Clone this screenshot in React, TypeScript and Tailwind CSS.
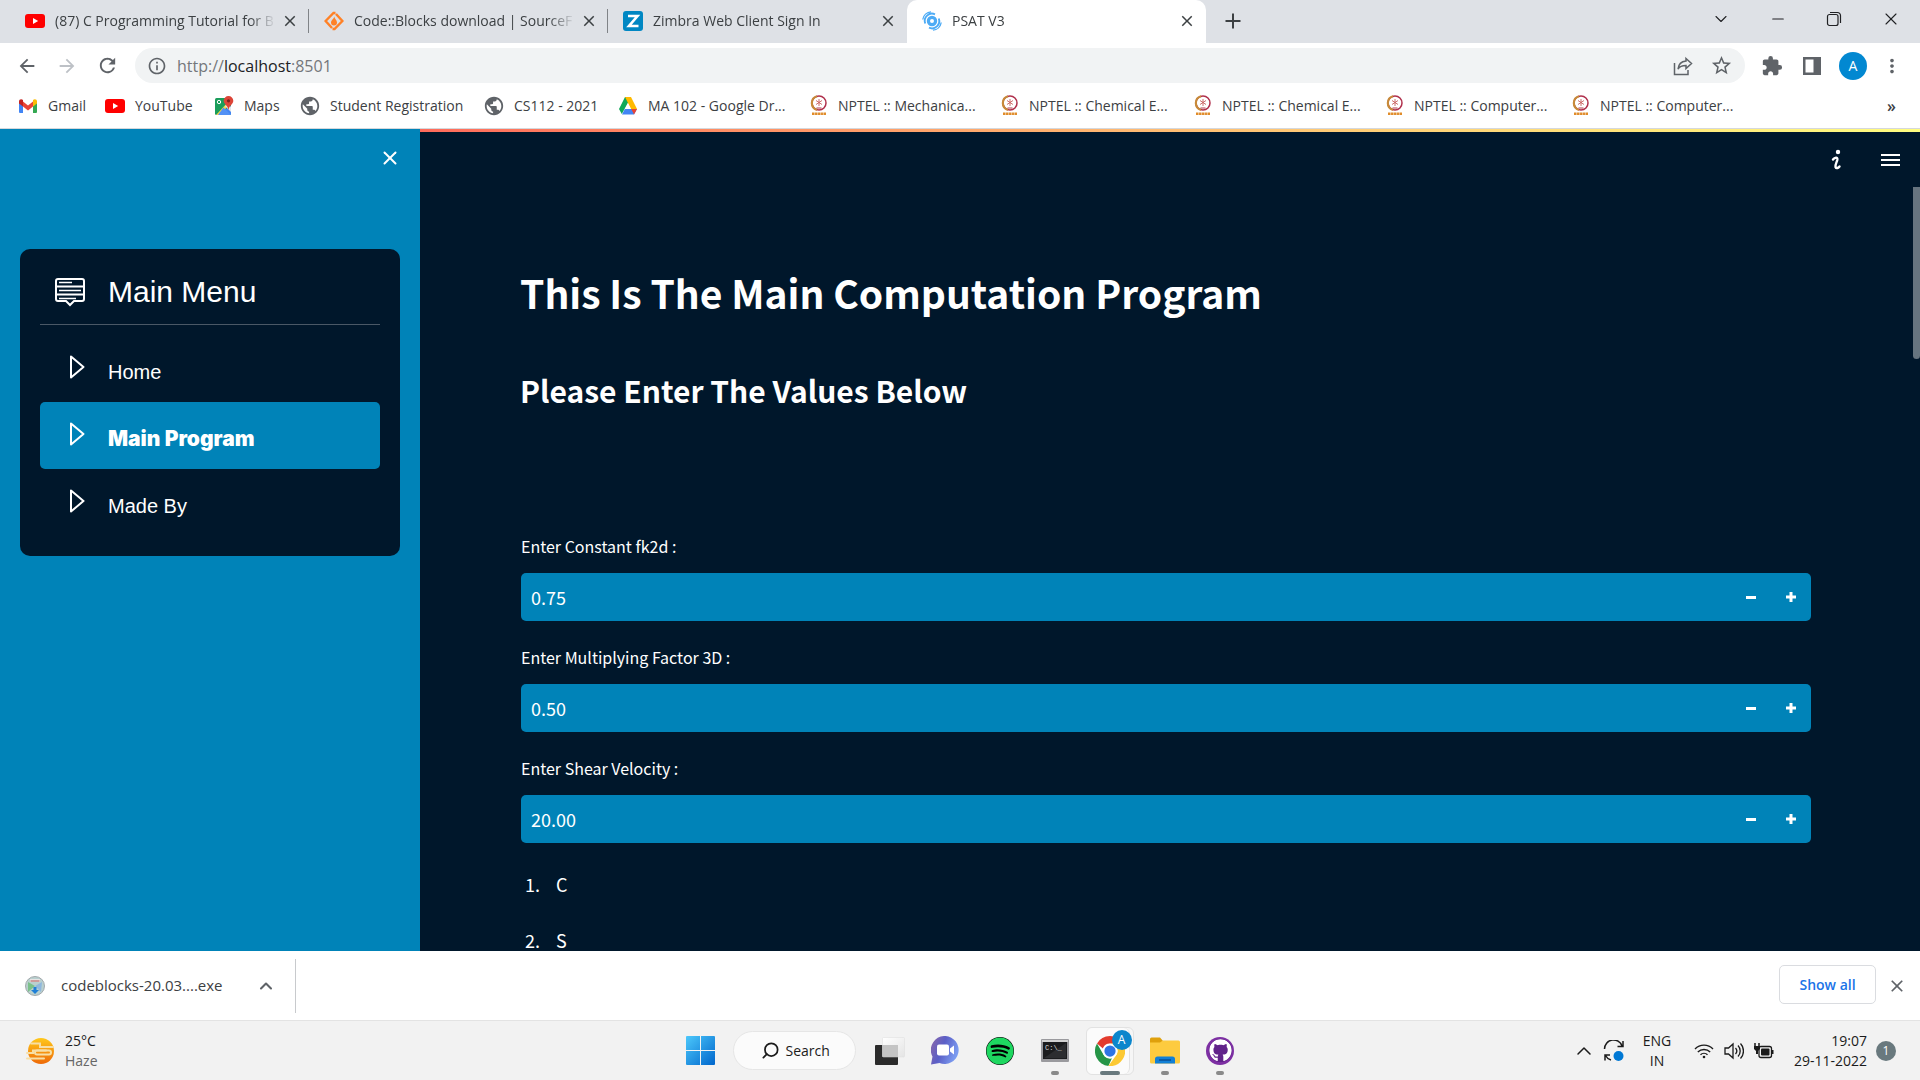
import type { ReactNode } from "react";
import { FaGithub, FaSpotify } from "react-icons/fa";
import {
  MdArrowBack,
  MdArrowForward,
  MdClose,
  MdExtension,
  MdMoreVert,
  MdOutlineInfo,
  MdPublic,
  MdRefresh,
  MdStarOutline,
} from "react-icons/md";
import { ChevronDown, ChevronUp, Minus, Search, X } from "lucide-react";

const YouTubeIcon = () => (
  <svg width="20" height="20" viewBox="0 0 20 20" className="shrink-0">
    <rect y="3" width="20" height="14" rx="3" fill="#f00" />
    <path d="M8 7l5.2 3L8 13z" fill="#fff" />
  </svg>
);

const SourceForgeIcon = () => (
  <svg width="20" height="20" viewBox="0 0 20 20" className="shrink-0" fill="none" stroke="#ff8126">
    <path d="M11.500 2L9.500 2 1.600 10l6.400 7" strokeWidth="2.400" />
    <path d="M8.500 18h2L18.400 10 12 3" strokeWidth="2.400" />
    <path d="M10.200 5.500c.3 2.400 2.800 3.400 2.800 6a3 3 0 0 1-6 .1c0-2.600 2.800-3.400 3.200-6.100z" fill="#ff8126" stroke="none" />
  </svg>
);

const ZimbraIcon = () => (
  <svg width="20" height="20" viewBox="0 0 20 20" className="shrink-0">
    <rect width="20" height="20" rx="3" fill="#0087c3" />
    <path d="M5 5h9.500L6 15h9.500" fill="none" stroke="#fff" strokeWidth="2.600" />
  </svg>
);

const SwirlIcon = () => (
  <svg width="20" height="20" viewBox="0 0 20 20" className="shrink-0" fill="none" stroke="#4dabf5">
    <circle cx="10" cy="10" r="3.600" strokeWidth="3.200" />
    <path d="M3.200 12.500A7.300 7.300 0 0 1 13 3.300M16.800 7.500A7.300 7.300 0 0 1 7 16.700" strokeWidth="1.900" />
    <path d="M.8 8.500A9 9 0 0 1 9 .9M19.200 11.500A9 9 0 0 1 11 19.100" strokeWidth="1.400" />
  </svg>
);

const GmailIcon = () => (
  <svg width="20" height="20" viewBox="0 0 20 20" className="shrink-0">
    <path d="M1 5v11a1 1 0 0 0 1 1h3V9z" fill="#4285f4" />
    <path d="M19 5v11a1 1 0 0 1-1 1h-3V9z" fill="#34a853" />
    <path d="M5 5.500l5 4 5-4v5l-5 4-5-4z" fill="#ea4335" />
    <path d="M1 5.500C1 3.200 3.400 2.700 5 4v6.500L1 7.500z" fill="#c5221f" />
    <path d="M19 5.500c0-2.300-2.400-2.800-4-1.500v6.500l4-3z" fill="#fbbc04" />
  </svg>
);

const MapsIcon = () => (
  <svg width="20" height="20" viewBox="0 0 20 20" className="shrink-0">
    <rect x="1" y="2" width="16" height="17" rx="1.500" fill="#1a9d5a" />
    <path d="M17 10v7.500a1.500 1.500 0 0 1-1.500 1.500H2z" fill="#4285f4" />
    <path d="M2 19l13-14 2 2-11.500 12z" fill="#fbd14b" />
    <path d="M9.500 11.500l7.500 7.500H4z" fill="#5391f5" />
    <path d="M11 10l6 6v-5l-3-3z" fill="#e4e7ea" />
    <circle cx="5" cy="6" r="1.700" fill="none" stroke="#fff" />
    <path d="M14.500 0a4.800 4.800 0 0 1 4.800 4.800c0 3.500-4.200 4.700-4.800 9.200-.6-4.500-4.800-5.700-4.800-9.200A4.800 4.800 0 0 1 14.500 0z" fill="#dc4437" />
    <circle cx="14.500" cy="4.800" r="1.600" fill="#7b231c" />
  </svg>
);

const DriveIcon = () => (
  <svg width="20" height="20" viewBox="0 0 20 20" className="shrink-0">
    <path d="M7 1h6L6.500 13 3.800 18 1 13z" fill="#0fa958" />
    <path d="M7 1h6l-3 5.300z" fill="#188038" />
    <path d="M7 1h6l6 12h-6z" fill="#ffba00" />
    <path d="M6.800 13H19l-3 5.500H4z" fill="#4285f4" />
    <path d="M13.200 13H19l-3 5.500z" fill="#ea4335" />
    <path d="M10 7.500L13 13H7z" fill="#fff" />
  </svg>
);

const NptelIcon = () => (
  <svg width="18" height="21" viewBox="0 0 18 21" className="shrink-0">
    <circle cx="9" cy="8" r="7" fill="none" stroke="#b0304c" strokeWidth="1.500" />
    <path d="M7 15A7.200 7.200 0 0 1 7 1.200" fill="none" stroke="#c78a3a" strokeWidth="2.200" />
    <path d="M9 4v7M6 5.500l6 4M12 5.500l-6 4" stroke="#c8605f" strokeWidth=".9" />
    <path d="M6.500 13h5" stroke="#b03a48" />
    <path d="M2 17.500h14v2.500H2z" fill="#e08c2a" />
    <path d="M4.600 17v4M7.600 17v4M10.600 17v4M13.400 17v4" stroke="#fff" strokeWidth=".5" />
  </svg>
);

const GlobeIcon = () => <MdPublic size={22} className="-mx-px shrink-0 text-[#5f6368]" />;

type TabInfo = { title: string; icon: ReactNode; active?: boolean; line?: boolean };

const tabs: TabInfo[] = [
  { title: "(87) C Programming Tutorial for B", icon: <YouTubeIcon />, line: true },
  { title: "Code::Blocks download | SourceF", icon: <SourceForgeIcon />, line: true },
  { title: "Zimbra Web Client Sign In", icon: <ZimbraIcon /> },
  { title: "PSAT V3", icon: <SwirlIcon />, active: true },
];

function TabItem({ tab }: { tab: TabInfo }) {
  return (
    <div
      role="tab"
      aria-selected={!!tab.active}
      className={
        tab.active
          ? "flex h-full w-[299px] items-center rounded-t-[10px] bg-white pb-0.5 pl-[15px]"
          : "flex h-full w-[299px] items-center pb-0.5 pl-[15px]"
      }
    >
      {tab.icon}
      <span className="ml-[10px] min-w-0 flex-1 overflow-hidden text-sm whitespace-nowrap [mask-image:linear-gradient(to_right,black_88%,transparent)]">
        {tab.title}
      </span>
      <button type="button" aria-label={`Close ${tab.title}`} className="ml-1 flex w-5 justify-center">
        <MdClose size={18} />
      </button>
      <span className={tab.line ? "ml-2 h-6 w-px bg-[#808387]" : "ml-2 h-6 w-px"} />
    </div>
  );
}

const bookmarks = [
  { label: "Gmail", icon: <GmailIcon />, width: "w-[87px]" },
  { label: "YouTube", icon: <YouTubeIcon />, width: "w-[109px]" },
  { label: "Maps", icon: <MapsIcon />, width: "w-[86px]" },
  { label: "Student Registration", icon: <GlobeIcon />, width: "w-[184px]" },
  { label: "CS112 - 2021", icon: <GlobeIcon />, width: "w-[134px]" },
  { label: "MA 102 - Google Dr...", icon: <DriveIcon />, width: "w-[192px]" },
  { label: "NPTEL :: Mechanica...", icon: <NptelIcon />, width: "w-[191px]" },
  { label: "NPTEL :: Chemical E...", icon: <NptelIcon />, width: "w-[193px]" },
  { label: "NPTEL :: Chemical E...", icon: <NptelIcon />, width: "w-[192px]" },
  { label: "NPTEL :: Computer...", icon: <NptelIcon />, width: "w-[186px]" },
  { label: "NPTEL :: Computer...", icon: <NptelIcon />, width: "w-[186px]" },
];

function BrowserChrome() {
  return (
    <header className="shrink-0 bg-white font-['Open_Sans',sans-serif] text-[#3c4043]">
      <div className="flex h-[43px] items-center bg-[#dee1e6] pl-[10px]">
        <div role="tablist" className="flex h-full">
          {tabs.map((tab) => (
            <TabItem key={tab.title} tab={tab} />
          ))}
        </div>
        <button type="button" aria-label="New tab" className="mb-0.5 ml-[17px]">
          <svg width="20" height="20" viewBox="0 0 20 20" stroke="#3c4043" strokeWidth="2">
            <path d="M10 2.500v15M2.500 10h15" />
          </svg>
        </button>
        <div className="mr-[19px] mb-[6px] ml-auto flex items-center gap-[38px] text-[#202124]">
          <button type="button" aria-label="Search tabs"><ChevronDown size={20} strokeWidth={1.300} /></button>
          <button type="button" aria-label="Minimize"><Minus size={18} strokeWidth={1.500} /></button>
          <button type="button" aria-label="Restore">
            <svg width="18" height="18" viewBox="0 0 18 18" fill="none" stroke="#202124" strokeWidth="1.200">
              <rect x="2.500" y="4.500" width="10.500" height="11" rx="2" />
              <path d="M5 2.500h7.500a3 3 0 0 1 3 3V13" />
            </svg>
          </button>
          <button type="button" aria-label="Close window"><X size={20} strokeWidth={1.300} /></button>
        </div>
      </div>
      <div className="flex h-[45px] items-center pr-[17px] pl-4">
        <div className="flex w-[119px] items-center gap-[18px] text-[#5f6368]">
          <button type="button" aria-label="Back"><MdArrowBack size={22} /></button>
          <button type="button" aria-label="Forward" className="text-[#bdc1c6]"><MdArrowForward size={22} /></button>
          <button type="button" aria-label="Reload"><MdRefresh size={23} /></button>
        </div>
        <div className="flex h-[35px] flex-1 items-center rounded-full bg-[#f1f3f4] px-3">
          <MdOutlineInfo size={20} className="text-[#5f6368]" />
          <div className="ml-[10px] flex-1 text-base text-[#74777b]">
            http://<span className="text-[#202124]">localhost</span>:8501
          </div>
          <button type="button" aria-label="Share">
            <svg width="20" height="20" viewBox="0 0 20 20" fill="none" stroke="#5f6368" strokeWidth="1.500">
              <path d="M1.500 7v11.500H15V14" />
              <path d="M13 2.500L18.500 7.500 13 12.500V9.500C9 9.500 6.500 10.500 5 13c.5-5 3.500-7.500 8-8z" />
            </svg>
          </button>
          <button type="button" aria-label="Bookmark" className="ml-[17px] text-[#5f6368]"><MdStarOutline size={23} /></button>
        </div>
        <div className="ml-4 flex items-center text-[#5f6368]">
          <button type="button" aria-label="Extensions"><MdExtension size={22} /></button>
          <button type="button" aria-label="Side panel" className="ml-5">
            <svg width="18" height="18" viewBox="0 0 18 18">
              <path d="M0 0h18v18H0zM2.500 2.500v13h8v-13z" fill="#5f6368" fillRule="evenodd" />
            </svg>
          </button>
          <button type="button" aria-label="Profile" className="ml-[18px] flex size-7 items-center justify-center rounded-full bg-[#0288d1] text-sm text-white">
            A
          </button>
          <button type="button" aria-label="Menu" className="ml-[14px]"><MdMoreVert size={22} /></button>
        </div>
      </div>
      <nav className="flex h-[41px] items-center border-b border-[#d5d8dc] pr-6 pb-[5px] pl-[18px] text-sm">
        {bookmarks.map((b, i) => (
          <a key={i} href="#" className={`flex shrink-0 items-center gap-[10px] whitespace-nowrap ${b.width}`}>
            {b.icon}
            {b.label}
          </a>
        ))}
        <button type="button" aria-label="More bookmarks" className="ml-auto text-base font-semibold">»</button>
      </nav>
    </header>
  );
}

function Sidebar() {
  return (
    <aside className="flex w-[420px] shrink-0 flex-col bg-[#0083b8] px-5 pt-[18px] text-white">
      <button type="button" aria-label="Close sidebar" className="-mr-px self-end">
        <X size={22} strokeWidth={2.200} />
      </button>
      <nav className="mt-20 rounded-[10px] bg-[#00172b] p-5 font-['Liberation_Sans',Arial,sans-serif]">
        <div className="flex h-14 items-center border-b border-[#4a5866] pb-[10px] pl-[15px]">
          <svg width="30" height="30" viewBox="0 0 30 30" fill="none" stroke="#fff" strokeWidth="2">
            <path d="M3 2h24a2 2 0 0 1 2 2v18a2 2 0 0 1-2 2h-8l-4 4-4-4H3a2 2 0 0 1-2-2V4a2 2 0 0 1 2-2z" />
            <path d="M1 9.500h28M1 17.500h28" />
            <path d="M4 5.500h13M4 13.500h22M4 21.500h17" strokeWidth="1.500" />
          </svg>
          <h2 className="ml-[23px] text-[30px] leading-9">Main Menu</h2>
        </div>
        <ul className="mt-[10px] text-xl">
          {["Home", "Main Program", "Made By"].map((item) => (
            <li key={item}>
              <a
                href="#"
                className={
                  item === "Main Program"
                    ? "flex h-[67px] items-center rounded-[5px] bg-[#0083b8] pl-[29px] font-['Inter',sans-serif] text-[21px] font-black"
                    : "flex h-[67px] items-center pl-[29px]"
                }
              >
                <svg width="17" height="24" viewBox="0 0 17 24" fill="none" stroke="#fff" strokeWidth="2" strokeLinejoin="round" className="mb-1">
                  <path d="M2 1.500v21L14.500 12z" />
                </svg>
                <span className="ml-[22px] pt-[6px]">{item}</span>
              </a>
            </li>
          ))}
        </ul>
      </nav>
    </aside>
  );
}

function NumberField({ id, label, value }: { id: string; label: string; value: string }) {
  return (
    <div className="mb-6">
      <label htmlFor={id} className="block h-[39px] text-base leading-6">{label}</label>
      <div className="flex h-12 overflow-hidden rounded-[5px] bg-[#0083b8]">
        <input id={id} defaultValue={value} className="min-w-0 flex-1 bg-transparent pl-[10px] text-lg outline-none" />
        <button type="button" aria-label={`Decrease ${label}`} className="flex w-10 items-center justify-center">
          <span className="h-[3px] w-[10px] bg-white" />
        </button>
        <button type="button" aria-label={`Increase ${label}`} className="flex w-10 items-center justify-center">
          <svg width="10" height="10" viewBox="0 0 10 10" stroke="#fff" strokeWidth="3">
            <path d="M5 0v10M0 5h10" />
          </svg>
        </button>
      </div>
    </div>
  );
}

function Content() {
  return (
    <main className="relative min-w-0 flex-1 overflow-hidden bg-[#00172b] font-['Noto_Sans_CJK_SC',sans-serif] text-white">
      <div className="h-[3px] bg-linear-to-r from-[#ff6b5b] via-[#ffbd73] to-[#fffd80]" />
      <div className="flex h-14 items-center justify-end gap-[35px] pr-5">
        <button type="button" aria-label="Information">
          <svg width="20" height="22" viewBox="0 0 20 22" fill="none" stroke="#fff" strokeWidth="2.400" strokeLinecap="round">
            <circle cx="12" cy="3" r="1.400" fill="#fff" strokeWidth="1.600" />
            <path d="M7 10.500C8.500 8.500 12 7.500 11.300 11c-.6 2.600-2.300 4.500-1.800 7 .8 2 3 .8 4-.5" />
          </svg>
        </button>
        <button type="button" aria-label="Open menu" className="flex w-[19px] flex-col gap-[3px]">
          <span className="h-0.5 bg-white" />
          <span className="h-0.5 bg-white" />
          <span className="h-0.5 bg-white" />
        </button>
      </div>
      <div className="pr-[109px] pl-[100px]">
        <h1 className="pt-[74px] text-[39px] leading-[60px] font-bold">This Is The Main Computation Program</h1>
        <h2 className="mt-[44px] mb-[120px] text-[30px] leading-[48px] font-bold">Please Enter The Values Below</h2>
        <div className="pl-px">
          <NumberField id="fk2d" label="Enter Constant fk2d :" value="0.75" />
          <NumberField id="factor" label="Enter Multiplying Factor 3D :" value="0.50" />
          <NumberField id="shear" label="Enter Shear Velocity :" value="20.00" />
        </div>
        <ol className="list-decimal pt-[3px] pl-6 text-lg leading-7">
          <li className="mb-7 pl-3">C</li>
          <li className="pl-3">S</li>
        </ol>
      </div>
      <div className="absolute top-[58px] right-0 h-[172px] w-[7px] rounded-b-full bg-[#66747f]" />
    </main>
  );
}

function DownloadBar() {
  return (
    <section aria-label="Downloads" className="flex h-[69px] shrink-0 items-center bg-white pr-[13px] pl-[25px] font-['Open_Sans',sans-serif] text-[#3c4043]">
      <svg width="20" height="20" viewBox="0 0 20 20">
        <circle cx="10" cy="10" r="9.500" fill="#b9d0cf" stroke="#a3a8ac" />
        <path d="M3 6l7 4-7 6z" fill="#7cc08a" />
        <path d="M17 6l-7 4 6 6z" fill="#8fb7dd" />
        <path d="M5 3h10v3H5z" fill="#e8e4e4" />
        <path d="M5.500 5h9" stroke="#b35454" />
        <path d="M8.500 11h3v3H14l-4 4-4-4h2.500z" fill="#1f7fd6" />
      </svg>
      <span className="ml-4 w-[171px] text-[15px]">codeblocks-20.03....exe</span>
      <button type="button" aria-label="Download options" className="ml-6 text-[#5f6368]"><ChevronUp size={20} strokeWidth={2.500} /></button>
      <span className="ml-[19px] h-[54px] w-px bg-[#c8cacd]" />
      <button type="button" className="mr-[11px] mb-0.5 ml-auto h-[39px] w-[97px] rounded-[5px] border border-[#dadce0] text-sm font-semibold text-[#1a73e8]">
        Show all
      </button>
      <button type="button" aria-label="Close downloads" className="text-[#5f6368]"><MdClose size={20} /></button>
    </section>
  );
}

function TaskIcon({ label, children, running }: { label: string; children: ReactNode; running?: boolean }) {
  return (
    <button type="button" aria-label={label} className="relative flex h-12 w-[55px] items-center justify-center">
      {children}
      {running && <span className="absolute bottom-0 h-1 w-2 rounded-full bg-[#8a8a8a]" />}
    </button>
  );
}

function Taskbar() {
  return (
    <footer className="grid h-[60px] shrink-0 grid-cols-[1fr_auto_1fr] items-center border-t border-[#e3e3e3] bg-[#f2f2f2] font-['Open_Sans',sans-serif] text-sm leading-5 text-[#1b1b1b]">
      <div className="flex items-center gap-[10px] pl-[26px]">
        <svg width="29" height="28" viewBox="0 0 29 28">
          <defs>
            <linearGradient id="sun" x2="0" y2="1">
              <stop stopColor="#ffc81a" />
              <stop offset="1" stopColor="#ee6a08" />
            </linearGradient>
          </defs>
          <circle cx="15" cy="14" r="13" fill="url(#sun)" />
          <g fill="none" stroke="#f7dfa6" strokeWidth="2" strokeLinecap="round">
            <path d="M5 6.500h9v3.500h13M1 16h6v-2.500h13M1 21.500h17" />
            <rect x="9" y="13.500" width="16" height="4" rx="2" />
          </g>
        </svg>
        <div>
          <div>25°C</div>
          <div className="text-[#666]">Haze</div>
        </div>
      </div>
      <div className="flex items-center">
        <TaskIcon label="Start">
          <svg width="29" height="29" viewBox="0 0 29 29">
            <defs>
              <linearGradient id="win" x2="1" y2="1">
                <stop stopColor="#4cc8fb" />
                <stop offset="1" stopColor="#0066cc" />
              </linearGradient>
            </defs>
            <path d="M0 1a1 1 0 0 1 1-1h13v14H0zM15 0h13a1 1 0 0 1 1 1v13H15zM0 15h14v14H1a1 1 0 0 1-1-1zM15 15h14v13a1 1 0 0 1-1 1H15z" fill="url(#win)" />
          </svg>
        </TaskIcon>
        <button type="button" className="mr-[7px] ml-[5px] flex h-[39px] w-[123px] items-center gap-[6px] rounded-full border border-[#e6e6e6] bg-[#fbfbfb] pl-[27px]">
          <Search size={19} strokeWidth={2.200} className="-scale-x-100" />
          Search
        </button>
        <TaskIcon label="Task view">
          <svg width="30" height="28" viewBox="0 0 30 28">
            <defs>
              <linearGradient id="pane" x2="1" y2="1">
                <stop stopColor="#fff" />
                <stop offset="1" stopColor="#e4e4e4" />
              </linearGradient>
            </defs>
            <rect y="8" width="23" height="20" rx="1" fill="#2b2b2b" />
            <rect x="7.500" y=".5" width="22" height="19.500" rx="1" fill="url(#pane)" stroke="#ddd" strokeWidth=".5" />
            <path d="M7.500 8H23v12H7.500z" fill="#c4c4c4" />
          </svg>
        </TaskIcon>
        <TaskIcon label="Chat">
          <svg width="29" height="29" viewBox="0 0 29 29">
            <defs>
              <linearGradient id="chat" x1="0" y1="0" x2="1" y2="0.400">
                <stop stopColor="#8d68a8" />
                <stop offset=".5" stopColor="#5b5fc7" />
                <stop offset="1" stopColor="#7b9bf0" />
              </linearGradient>
            </defs>
            <path d="M14.500 0a14 14 0 1 1-6 27L0 28.500l1.500-8A14 14 0 0 1 14.500 0z" fill="url(#chat)" />
            <rect x="6" y="8.500" width="12" height="11" rx="2" fill="#fff" />
            <path d="M19 12.500l4-3v9l-4-3z" fill="#fff" />
          </svg>
        </TaskIcon>
        <TaskIcon label="Spotify">
          <FaSpotify size={28} className="rounded-full bg-black text-[#1ed760]" />
        </TaskIcon>
        <TaskIcon label="Command Prompt" running>
          <svg width="28" height="23" viewBox="0 0 28 23">
            <rect width="28" height="23" rx="1" fill="#9a9a9e" />
            <rect x="1" y="1" width="26" height="2" fill="#d2d2d2" />
            <rect x="2" y="3" width="24" height="17" fill="#1b1c1e" />
            <path d="M3 19L25 4v15z" fill="#2c2d30" />
            <text x="4" y="11" fontSize="7" fill="#ddd" fontFamily="Liberation Mono, monospace">C:\_</text>
          </svg>
        </TaskIcon>
        <button type="button" aria-label="Google Chrome" className="relative flex h-12 w-[55px] items-center justify-center">
          <span className="flex h-12 w-[48px] rounded-md border border-[#e2e2e2] bg-[#f6f6f6]">
            <span className="flex w-[43px] items-center justify-center rounded-md border-r border-[#e2e2e2] bg-[#fbfbfb] pl-[3px]">
              <svg width="30" height="30" viewBox="0 0 48 48">
                <circle cx="24" cy="24" r="24" fill="#fff" />
                <path d="M24 0a24 24 0 0 1 20.800 12H24a12 12 0 0 0-11.300 8L3.200 12A24 24 0 0 1 24 0z" fill="#e33b2e" />
                <path d="M3.200 12l10.400 18A12 12 0 0 0 27 35.600L21.500 48A24 24 0 0 1 3.200 12z" fill="#269547" />
                <path d="M44.800 12A24 24 0 0 1 21.500 48l12.900-18A12 12 0 0 0 32 15l-8-3z" fill="#fcc934" />
                <circle cx="24" cy="24" r="11.800" fill="#fff" />
                <circle cx="24" cy="24" r="9" fill="#2f74e4" />
              </svg>
            </span>
          </span>
          <span className="absolute top-[3px] right-[6px] flex size-5 items-center justify-center rounded-full bg-[#0b86cc] text-xs text-white">A</span>
          <span className="absolute bottom-0 h-1 w-5 rounded-full bg-[#69797e]" />
        </button>
        <TaskIcon label="File Explorer" running>
          <svg width="30" height="27" viewBox="0 0 30 27">
            <path d="M0 2a1.500 1.500 0 0 1 1.500-1.500H10L13 4v4H0z" fill="#dfa00c" />
            <path d="M0 5.500h10l3-2h15.500A1.500 1.500 0 0 1 30 5v20a1.500 1.500 0 0 1-1.500 1.500h-27A1.500 1.500 0 0 1 0 25z" fill="#fdcb3f" />
            <path d="M5 26.500V22a2.500 2.500 0 0 1 2.500-2.500h15A2.500 2.500 0 0 1 25 22v4.500z" fill="#1280d6" />
            <path d="M9 23h12" stroke="#0a4f94" strokeWidth="1.500" />
          </svg>
        </TaskIcon>
        <TaskIcon label="GitHub Desktop" running>
          <span className="flex size-7 items-center justify-center rounded-full bg-[#7d2fa3]">
            <FaGithub size={23} className="rounded-full bg-[#61238a] text-white" />
          </span>
        </TaskIcon>
      </div>
      <div className="flex items-center justify-end pr-6">
        <ChevronUp size={24} strokeWidth={1.500} />
        <svg width="22" height="22" viewBox="0 0 22 22" fill="none" stroke="#1b1b1b" strokeWidth="1.500" className="ml-[7px]">
          <path d="M1.500 9A9 9 0 0 1 19 6M20 1v5.500h-5.500M8 20a9 9 0 0 1-5.500-4.500M2 20.500V15h5" />
          <circle cx="15.500" cy="16" r="5" fill="#0078d4" stroke="none" />
        </svg>
        <div className="ml-4 w-8 text-center">
          <div>ENG</div>
          <div>IN</div>
        </div>
        <svg width="20" height="16" viewBox="0 0 20 16" fill="none" stroke="#1b1b1b" strokeWidth="1.400" className="ml-[21px]">
          <path d="M1 6a12.500 12.500 0 0 1 18 0M3.800 9a8.800 8.800 0 0 1 12.400 0M6.500 11.800a5 5 0 0 1 7 0" />
          <circle cx="10" cy="14" r="1.300" fill="#1b1b1b" stroke="none" />
        </svg>
        <svg width="20" height="18" viewBox="0 0 20 18" fill="none" stroke="#1b1b1b" strokeWidth="1.300" className="ml-[10px]">
          <path d="M1 6h3.500L9 2v14l-4.500-4H1z" />
          <path d="M11.500 6a4.500 4.500 0 0 1 0 6M14 3.500a8 8 0 0 1 0 11M16.500 1.500a11 11 0 0 1 0 15" />
        </svg>
        <svg width="20" height="16" viewBox="0 0 20 16" className="ml-[10px]">
          <path d="M1 0v3M5 0v3" stroke="#1b1b1b" strokeWidth="1.500" />
          <path d="M0 3h6v3L4 8v3H2V8L0 6z" fill="#1b1b1b" />
          <rect x="5" y="3.500" width="12.500" height="11" rx="2" fill="none" stroke="#1b1b1b" strokeWidth="1.300" />
          <rect x="7" y="5.500" width="8.500" height="7" rx="1" fill="#1b1b1b" />
          <path d="M18.500 7v4" stroke="#1b1b1b" strokeWidth="2" />
        </svg>
        <div className="ml-[19px] w-[74px] text-right whitespace-nowrap">
          <div>19:07</div>
          <div>29-11-2022</div>
        </div>
        <span className="ml-[9px] flex size-5 items-center justify-center rounded-full bg-[#69797e] text-xs text-white">1</span>
      </div>
    </footer>
  );
}

export default function App() {
  return (
    <div className="flex h-screen flex-col overflow-hidden">
      <BrowserChrome />
      <div className="flex min-h-0 flex-1">
        <Sidebar />
        <Content />
      </div>
      <DownloadBar />
      <Taskbar />
    </div>
  );
}
